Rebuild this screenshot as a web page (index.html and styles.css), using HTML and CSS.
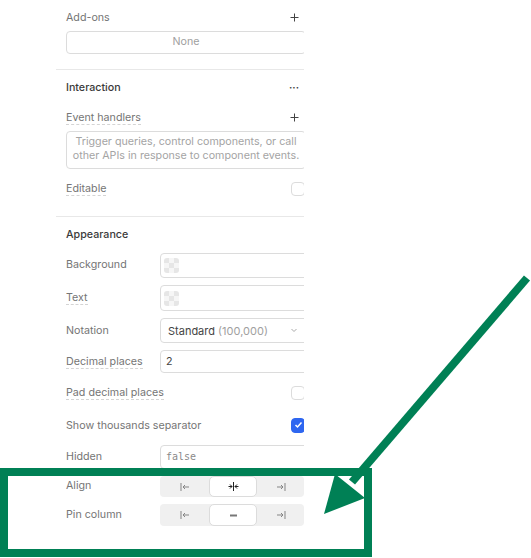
FILE: index.html
```html
<!DOCTYPE html>
<html lang="en">
<head>
  <meta charset="UTF-8">
  <title>Inspector</title>
  <link rel="stylesheet" href="styles.css">
</head>
<body>
  <div class="inspector">
    <div class="section addons">
      <div class="row head-row">
        <span class="label">Add-ons</span>
        <svg class="plus" width="9" height="9" viewBox="0 0 9 9"><path d="M4.5 0.500v8M0.500 4.500h8"/></svg>
      </div>
      <div class="none-box">None</div>
    </div>

    <div class="section interaction">
      <div class="row title-row">
        <span class="title">Interaction</span>
        <span class="dots">···</span>
      </div>
      <div class="row head-row">
        <span class="label dashed">Event handlers</span>
        <svg class="plus" width="9" height="9" viewBox="0 0 9 9"><path d="M4.5 0.500v8M0.500 4.500h8"/></svg>
      </div>
      <div class="hint">Trigger queries, control components, or call other APIs in response to component events.</div>
      <div class="row check-row editable">
        <span class="label dashed">Editable</span>
        <span class="checkbox"></span>
      </div>
    </div>

    <div class="section appearance">
      <div class="row title-row">
        <span class="title">Appearance</span>
      </div>
      <div class="row field-row raised">
        <div class="field-label"><span class="label">Background</span></div>
        <div class="input"><span class="swatch"></span></div>
      </div>
      <div class="row field-row text-color">
        <div class="field-label"><span class="label dashed">Text</span></div>
        <div class="input"><span class="swatch"></span></div>
      </div>
      <div class="row field-row">
        <div class="field-label"><span class="label">Notation</span></div>
        <div class="input select">
          <span>Standard <span class="muted">(100,000)</span></span>
          <svg class="chevron" width="8" height="5" viewBox="0 0 8 5"><path d="M1.500 1l2.500 2.500L6.500 1"/></svg>
        </div>
      </div>
      <div class="row field-row decimals">
        <div class="field-label"><span class="label dashed">Decimal places</span></div>
        <div class="input">2</div>
      </div>
      <div class="row check-row pad">
        <span class="label dashed">Pad decimal places</span>
        <span class="checkbox"></span>
      </div>
      <div class="row check-row thousands">
        <span class="label">Show thousands separator</span>
        <span class="checkbox checked">
          <svg width="9" height="8" viewBox="0 0 9 8"><path d="M1.500 4l2 2 4-4.500"/></svg>
        </span>
      </div>
      <div class="row field-row hidden-row">
        <div class="field-label"><span class="label">Hidden</span></div>
        <div class="input code">false</div>
      </div>
      <div class="row field-row align raised">
        <div class="field-label"><span class="label">Align</span></div>
        <div class="segments">
          <span class="segment"><svg width="10" height="10" viewBox="0 0 10 10"><path d="M1 1v8M9 5H3M5 3L3 5l2 2"/></svg></span>
          <span class="segment active"><svg class="dark" width="11" height="11" viewBox="0 0 11 11"><path d="M5.500 1v9M0.500 5.500h3.500M2 3.500l2 2-2 2M10.500 5.500H7M9 3.500l-2 2 2 2"/></svg></span>
          <span class="segment"><svg width="10" height="10" viewBox="0 0 10 10"><path d="M9 1v8M1 5h6M5 3l2 2-2 2"/></svg></span>
        </div>
      </div>
      <div class="row field-row pin">
        <div class="field-label"><span class="label">Pin column</span></div>
        <div class="segments">
          <span class="segment"><svg width="10" height="10" viewBox="0 0 10 10"><path d="M1 1v8M9 5H3M5 3L3 5l2 2"/></svg></span>
          <span class="segment active"><svg class="thick" width="9" height="3" viewBox="0 0 9 3"><path d="M1 1.500h7"/></svg></span>
          <span class="segment"><svg width="10" height="10" viewBox="0 0 10 10"><path d="M9 1v8M1 5h6M5 3l2 2-2 2"/></svg></span>
        </div>
      </div>
    </div>
  </div>

  <!-- annotation drawn over the screenshot -->
  <div class="frame"></div>
  <svg class="arrow" width="531" height="558" viewBox="0 0 531 558">
    <path class="shaft" d="M527 278L352 482"/>
    <polygon class="head" points="324,514 365,498 335,474"/>
  </svg>
</body>
</html>
```

FILE: styles.css
```css
body {
  margin: 0;
  width: 531px;
  height: 558px;
  overflow: hidden;
  position: relative;
  background: #fff;
  font-family: Inter, 'Noto Sans', sans-serif;
  font-size: 10.7px;
  color: #757575;
}
.inspector {
  width: 248px;
  margin-left: 56px;
  overflow: hidden;
}
.section {
  width: 260px;
  box-sizing: border-box;
  padding: 10px 0 0 10px;
  border-bottom: 1px solid #e8e8e8;
}
.section:last-child {
  border-bottom: 0;
}
.addons {
  height: 70px;
}
.interaction {
  height: 147px;
}
.row {
  display: flex;
  align-items: center;
  justify-content: space-between;
  width: 239px;
}
.label {
  display: inline-block;
  line-height: 14px;
  white-space: nowrap;
}
.dashed {
  line-height: 13px;
  border-bottom: 1px dashed #d4d4d4;
}

/* section heads */
.head-row {
  height: 14px;
  padding-right: 6px;
  box-sizing: border-box;
}
.head-row .label {
  padding-top: 2px;
}
.plus path {
  stroke: #444;
  fill: none;
}
.title-row {
  height: 14px;
  padding-right: 6px;
  box-sizing: border-box;
  margin-bottom: 16px;
}
.appearance .title-row {
  margin-bottom: 12px;
}
.title {
  color: #3a3a3a;
  font-weight: 500;
}
.dots {
  color: #444;
  font-size: 10px;
  font-weight: 700;
}

/* boxes */
.none-box {
  margin-top: 7px;
  width: 240px;
  height: 23px;
  line-height: 20px;
  box-sizing: border-box;
  border: 1px solid #dcdcdc;
  border-radius: 4px;
  text-align: center;
  color: #a0a0a0;
}
.hint {
  margin-top: 7px;
  width: 240px;
  height: 38px;
  box-sizing: border-box;
  border: 1px solid #dcdcdc;
  border-radius: 4px;
  padding: 3px 2px;
  line-height: 14px;
  color: #a4a4a4;
  text-align: center;
}

/* checkbox rows */
.check-row {
  height: 14px;
}
.editable {
  margin-top: 13px;
}
.pad {
  margin-top: 13px;
}
.thousands {
  margin-top: 18px;
}
.thousands .label {
  padding-top: 2px;
}
.checkbox {
  width: 14px;
  height: 14px;
  flex: none;
  box-sizing: border-box;
  border: 1px solid #dcdcdc;
  border-radius: 4px;
}
.checkbox.checked {
  height: 15px;
  background: #2e66f0;
  border-color: #2e66f0;
  display: flex;
  align-items: center;
  justify-content: center;
}
.checked path {
  stroke: #fff;
  stroke-width: 1.5;
  fill: none;
}

/* label + control rows */
.field-row {
  width: 254px;
  justify-content: flex-start;
  margin-bottom: 7px;
}
.field-label {
  width: 94px;
  flex: none;
  display: flex;
}
.raised .field-label {
  padding-bottom: 2px;
}
.input {
  flex: none;
  width: 160px;
  height: 25px;
  box-sizing: border-box;
  border: 1px solid #dcdcdc;
  border-radius: 4px;
  display: flex;
  align-items: center;
  padding-left: 5px;
  color: #444;
}
.text-color .input {
  height: 26px;
}
.decimals {
  margin-bottom: 0;
}
.decimals .input {
  height: 23px;
}
.swatch {
  width: 15px;
  height: 15px;
  margin-left: -2px;
  border-radius: 3px;
  background-color: #f4f4f4;
  background-image: conic-gradient(#f6f6f6 25%, #e6e6e6 0 50%, #f6f6f6 0 75%, #e6e6e6 0);
  background-size: 10px 10px;
}
.select {
  padding: 0 21px 0 7px;
  justify-content: space-between;
  font-size: 11px;
}
.muted {
  color: #a0a0a0;
}
.chevron path {
  stroke: #aaa;
  fill: none;
}
.hidden-row {
  margin-top: 13px;
}
.code {
  height: 24px;
  padding-bottom: 2px;
  font-family: 'DejaVu Sans Mono', monospace;
  font-size: 10px;
  color: #8a8a8a;
}
.segments {
  flex: none;
  width: 144px;
  height: 21px;
  background: #f0f0f0;
  border-radius: 4px;
  display: grid;
  grid-template-columns: 49px 48px 47px;
}
.pin .segments {
  height: 22px;
}
.segment {
  display: flex;
  align-items: center;
  justify-content: center;
}
.segment svg path {
  stroke: #858585;
  fill: none;
}
.segment.active {
  background: #fff;
  border: 1px solid #dcdcdc;
  border-radius: 5px;
  box-sizing: border-box;
}
.segment svg.dark path {
  stroke: #222;
}
.segment svg.thick path {
  stroke: #777;
  stroke-width: 2;
}

/* green annotation */
.frame {
  position: absolute;
  left: 0;
  top: 468px;
  width: 372px;
  height: 89px;
  box-sizing: border-box;
  border: 8px solid #008055;
}
.arrow {
  position: absolute;
  left: 0;
  top: 0;
}
.shaft {
  stroke: #008055;
  stroke-width: 8;
  fill: none;
}
.head {
  fill: #008055;
}
```
